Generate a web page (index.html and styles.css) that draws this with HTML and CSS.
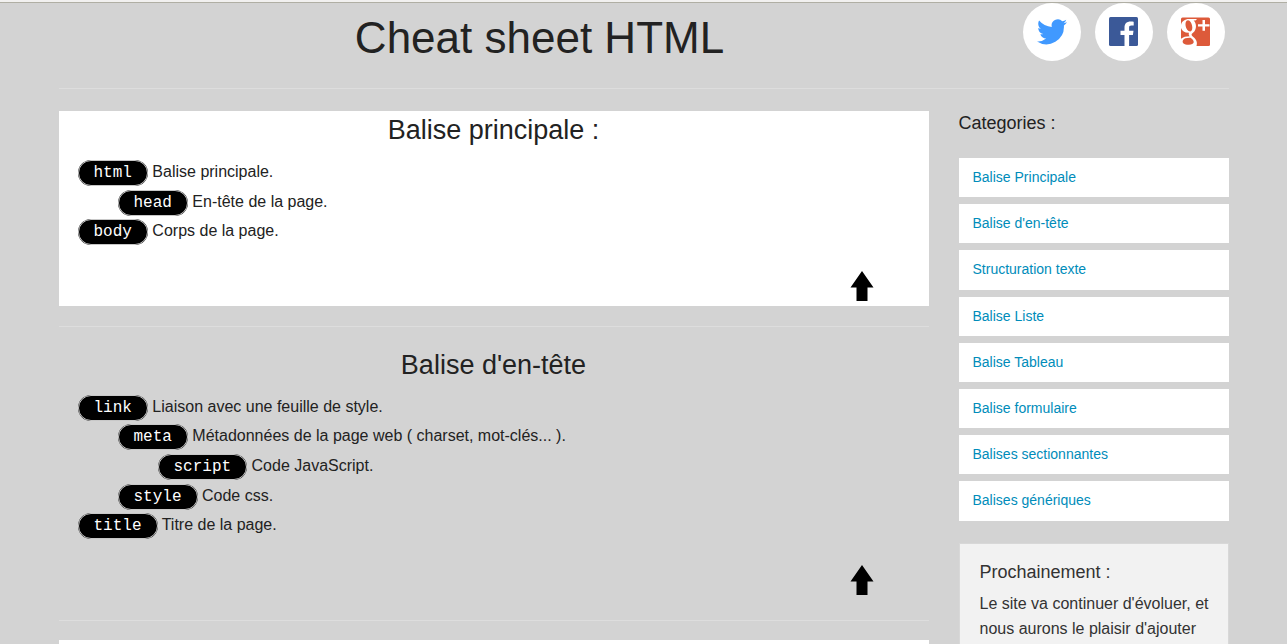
FILE: index.html
```html
<!DOCTYPE html>
<html lang="fr">
<head>
<meta charset="utf-8">
<title>Cheat sheet HTML</title>
<link rel="stylesheet" href="styles.css">
</head>
<body>
<div class="top-edge"></div>
<div class="page">
  <header class="header">
    <h1>Cheat sheet HTML</h1>
    <nav class="social" aria-label="Partager">
      <a href="#twitter" aria-label="Twitter"><svg viewBox="0 0 30 30"><path fill="#4099ff" d="M30 5.200c-1.100.5-2.300.8-3.500 1 1.300-.8 2.200-2 2.700-3.400-1.200.7-2.500 1.200-3.900 1.500A6.150 6.150 0 0 0 14.800 9.900C9.700 9.600 5.200 7.200 2.100 3.500c-1.700 2.900-.8 6.500 1.900 8.300-1 0-2-.3-2.800-.8 0 2.900 2 5.500 4.900 6.100-.9.300-1.800.3-2.800.1.800 2.500 3.100 4.200 5.800 4.300A12.400 12.400 0 0 1 0 24.400 17.500 17.500 0 0 0 26.900 8.500c1.200-.9 2.300-2 3.100-3.300z"/></svg></a>
      <a href="#facebook" aria-label="Facebook"><svg viewBox="0 0 30 30"><rect x="0" y="0" width="29" height="29" rx="1.500" fill="#3b5998"/><path fill="#fff" d="M15.500 29V18h-4v-4.300h4V10.500c0-4 2.400-6 6-6 1.600 0 2.700.1 3.200.2v3.900h-2.300c-1.900 0-2.300.9-2.300 2.200v2.900h4.400l-.6 4.300h-3.800v11z"/></svg></a>
      <a href="#google-plus" aria-label="Google+"><svg viewBox="0 0 30 30"><rect x="0" y="0.500" width="29" height="28.500" rx="1.500" fill="#dd5a3a"/><path fill="#fff" fill-rule="evenodd" d="M16 2H8C4 2 .5 4.500 0 8v3c1 3 4 5 8 4.800-.6 1.400-.2 2.500.7 3.400C5 19.200 2 20 0 21.700V29h15.500c1.300-4-.5-6.800-3.200-8.900-2.300-1.800-2.300-2.700-.3-4.300C16.300 12.500 15.500 6 12.600 3.500h2zM7 3.300c4 0 6.200 11 2.300 11.100C4.500 14.500 2.500 3.600 7 3.300zM9.500 20.800c5 3.300 4 6.900-1.500 7-5 .1-7.300-2.200-6-4.600 1-1.800 4-2.600 7.500-2.400zM21.500 3H24v4.200h4.500v2.200H24v4.400h-2.500V9.400H17V7.200h4.500z"/></svg></a>
    </nav>
  </header>
  <hr class="header-rule">
  <div class="columns">
    <main>
      <section class="card card-white" id="principale">
        <h2>Balise principale :</h2>
        <ul class="tags">
          <li><code>html</code> Balise principale.</li>
          <li class="level-1"><code>head</code> En-tête de la page.</li>
          <li><code>body</code> Corps de la page.</li>
        </ul>
        <a class="to-top" href="#" aria-label="Haut de page"><svg viewBox="0 0 24 30"><path d="M12 0 23.500 16.500H17.500V30h-11V16.500H.5z"/></svg></a>
      </section>
      <hr>
      <section class="card" id="en-tete">
        <h2>Balise d'en-tête</h2>
        <ul class="tags">
          <li><code>link</code> Liaison avec une feuille de style.</li>
          <li class="level-1"><code>meta</code> Métadonnées de la page web ( charset, mot-clés... ).</li>
          <li class="level-2"><code>script</code> Code JavaScript.</li>
          <li class="level-1"><code>style</code> Code css.</li>
          <li><code>title</code> Titre de la page.</li>
        </ul>
        <a class="to-top" href="#" aria-label="Haut de page"><svg viewBox="0 0 24 30"><path d="M12 0 23.500 16.500H17.500V30h-11V16.500H.5z"/></svg></a>
      </section>
      <hr>
      <section class="card card-white card-next" id="texte"></section>
    </main>
    <aside>
      <h3>Categories :</h3>
      <ul class="side-nav">
        <li><a href="#principale">Balise Principale</a></li>
        <li><a href="#en-tete">Balise d'en-tête</a></li>
        <li><a href="#texte">Structuration texte</a></li>
        <li><a href="#liste">Balise Liste</a></li>
        <li><a href="#tableau">Balise Tableau</a></li>
        <li><a href="#formulaire">Balise formulaire</a></li>
        <li><a href="#sectionnantes">Balises sectionnantes</a></li>
        <li><a href="#generiques">Balises génériques</a></li>
      </ul>
      <div class="panel">
        <h3>Prochainement :</h3>
        <p>Le site va continuer d'évoluer, et nous aurons le plaisir d'ajouter</p>
      </div>
    </aside>
  </div>
</div>
</body>
</html>
```
FILE: styles.css
```css
* { box-sizing: border-box; }
body {
  margin: 0;
  background: #d3d3d3;
  color: #222;
  font: 16px/1.6 "Liberation Sans", Arial, sans-serif;
}
h1, h2, h3, p, ul { margin: 0; padding: 0; font-weight: normal; }
ul { list-style: none; }
a { color: #008cba; text-decoration: none; }
hr { margin: 20px 0 19px; border: 0; border-top: 1px solid #ddd; }
.top-edge { height: 3px; background: #f2f1f0; border-bottom: 1px solid #b0afa4; }
.page { max-width: 1200px; margin: 0 auto; padding: 0 15px; }

.header { display: flex; align-items: flex-start; }
h1 { flex: 1; padding-top: 4px; font-size: 44px; line-height: 62px; text-align: center; }
.social { display: flex; gap: 14px; padding: 0 4px 0 2px; }
.social a {
  display: flex;
  align-items: center;
  justify-content: center;
  width: 58px;
  height: 58px;
  border-radius: 50%;
  background: #fff;
}
.social svg { width: 30px; height: 30px; }
.header-rule { margin: 19px 0 22px; }

.columns { display: grid; grid-template-columns: minmax(0, 1fr) 270px; gap: 30px; align-items: start; }
.card { padding-bottom: 5px; }
.card-white { background: #fff; }
.card-next { height: 40px; }
h2 { margin-bottom: 8px; font-size: 27px; line-height: 38px; text-align: center; }
.tags { padding-left: 19px; }
.tags li { padding: 2px 0; }
.tags .level-1 { margin-left: 40px; }
.tags .level-2 { margin-left: 80px; }
code {
  padding: 3px 15px;
  border: 1px solid #c8c8c8;
  border-radius: 14px;
  background: #000;
  color: #fff;
  font-family: "Liberation Mono", monospace;
  font-size: 16px;
  line-height: 1;
}
.to-top { display: block; width: 24px; margin: 25px 55px 0 auto; }
.to-top svg { display: block; width: 24px; height: 30px; }

h3 { font-size: 18px; line-height: 25px; }
.side-nav { padding: 22px 0 15px; font-size: 14px; }
.side-nav li { margin-bottom: 7px; background: #fff; }
.side-nav a { display: block; padding: 7px 14px; line-height: 1.8; }
.panel { padding: 19px 12px 20px 20px; border: 1px solid #d8d8d8; background: #f2f2f2; color: #333; }
.panel h3 { margin-bottom: 10px; line-height: 18px; }
```
